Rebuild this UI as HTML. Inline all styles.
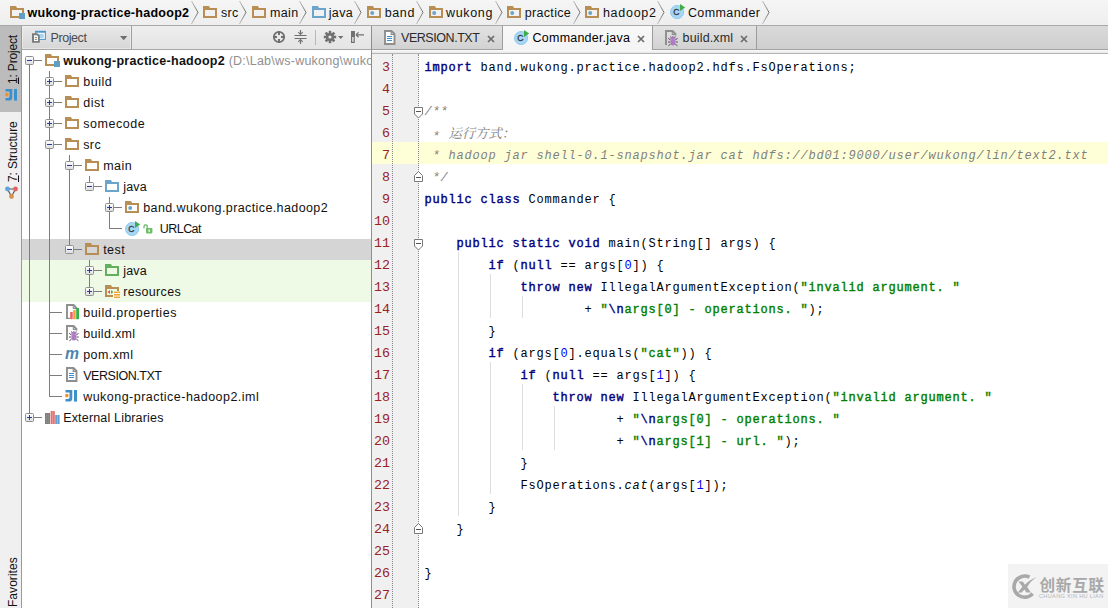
<!DOCTYPE html>
<html><head><meta charset="utf-8"><title>wukong-practice-hadoop2</title>
<style>
*{box-sizing:border-box;margin:0;padding:0}
html,body{width:1108px;height:608px;overflow:hidden;background:#fff}
body{position:relative;font-family:"Liberation Sans","Noto Sans CJK SC",sans-serif;font-size:12.5px;color:#000}
.abs{position:absolute}
.ic{position:absolute;display:block}
#nav{left:0;top:0;width:1108px;height:26px;background:linear-gradient(#f5f5f5,#eeeeee);border-bottom:1px solid #a9a9a9;overflow:hidden}
#nav .t{position:absolute;top:5px;line-height:17px;font-size:12.5px;white-space:pre;color:#111}
#nav .b{font-weight:bold;color:#000}
#strip{left:0;top:26px;width:21px;height:582px;background:#f0f0f0;overflow:hidden}
#stripb{left:21px;top:26px;width:1px;height:582px;background:#9a9a9a}
.vt{position:absolute;transform-origin:0 0;transform:rotate(-90deg);white-space:pre;font-size:12px;line-height:14px;height:14px;color:#111}
#ph{left:22px;top:26px;width:349px;height:24px;background:linear-gradient(#eeeeee,#e4e4e4);border-bottom:1px solid #a6a6a6;overflow:hidden}
#tree{left:22px;top:50px;width:349px;height:558px;background:#fff;overflow:hidden}
#tree .t{position:absolute;line-height:17px;white-space:pre;font-size:12.5px;color:#111}
#edb{left:371px;top:26px;width:1px;height:582px;background:#8e8e8e}
#tabs{left:372px;top:26px;width:736px;height:24px;background:linear-gradient(#dadada,#cecece);border-bottom:1px solid #a2a2a2}
#tabs2{left:372px;top:50px;width:736px;height:4px;background:linear-gradient(#fbfbfb,#e8e8e8);border-bottom:1px solid #b4b4b4}
.tab{position:absolute;top:0;height:23px;background:linear-gradient(#e2e2e2,#d2d2d2);border-right:1px solid #9c9c9c}
.tab.act{height:24px;background:linear-gradient(#f8f8f8,#f4f4f4)}
.tab .t{position:absolute;top:3.5px;line-height:17px;font-size:12.5px;white-space:pre;color:#2a2a2a}
#gut{left:372px;top:54px;width:47px;height:554px;background:#f0f0f0}
.ln{position:absolute;left:365px;width:25px;text-align:right;font-family:"Liberation Mono",monospace;font-size:13.33px;line-height:17px;height:17px;color:#992222}
.cl{position:absolute;left:424.4px;font-family:"Liberation Mono","Noto Serif CJK SC",monospace;font-size:12px;letter-spacing:0.8px;line-height:17px;height:17px;white-space:pre;color:#000}
.k{color:#000080;-webkit-text-stroke:0.4px #000080}
.s{color:#008000;-webkit-text-stroke:0.4px #008000}
.n{color:#0000ff}
.c{color:#808080;font-style:italic}
.i{font-style:italic}
.zh{font-family:"Noto Serif CJK SC","Noto Sans CJK SC",serif;font-size:13.33px;letter-spacing:0;position:relative;top:-2px}
.zhw{font-family:"Noto Sans CJK SC",sans-serif}
</style></head><body>
<div id="nav" class="abs"><svg width="0" height="0" style="position:absolute"><defs><linearGradient id="cg" gradientUnits="userSpaceOnUse" x1="0" y1="0" x2="0" y2="25"><stop offset="0" stop-color="#c8c8c8"/><stop offset="0.5" stop-color="#6a6a6a"/><stop offset="1" stop-color="#c8c8c8"/></linearGradient><linearGradient id="tg" x1="0" y1="0" x2="0" y2="1"><stop offset="0" stop-color="#fff"/><stop offset="1" stop-color="#dcdcdc"/></linearGradient></defs></svg><div class="ic" style="left:10px;top:6px"><svg width="16" height="14" viewBox="0 0 16 14" style="display:block"><path fill="#b98e54" fill-rule="evenodd" d="M0,0h6l1,2h7v10h-14z M2,4h10v6h-10z"/><rect x="9" y="7" width="6" height="6" fill="#5f9fc6" stroke="#f4f4f4" stroke-width="0"/></svg></div><span class="t b" style="left:27.5px;letter-spacing:0.269px">wukong-practice-hadoop2</span><svg class="ic" style="left:190.5px;top:0" width="8" height="25" viewBox="0 0 8 25"><path d="M0.5,1L7,12.4L0.5,24" fill="none" stroke="url(#cg)" stroke-width="1"/></svg><div class="ic" style="left:203px;top:6px"><svg width="16" height="14" viewBox="0 0 16 14" style="display:block"><path fill="#b98e54" fill-rule="evenodd" d="M0,0h6l1,2h7v10h-14z M2,4h10v6h-10z"/></svg></div><span class="t" style="left:220.9px;letter-spacing:0.314px">src</span><svg class="ic" style="left:238.6px;top:0" width="8" height="25" viewBox="0 0 8 25"><path d="M0.5,1L7,12.4L0.5,24" fill="none" stroke="url(#cg)" stroke-width="1"/></svg><div class="ic" style="left:252px;top:6px"><svg width="16" height="14" viewBox="0 0 16 14" style="display:block"><path fill="#b98e54" fill-rule="evenodd" d="M0,0h6l1,2h7v10h-14z M2,4h10v6h-10z"/></svg></div><span class="t" style="left:270.0px;letter-spacing:0.369px">main</span><svg class="ic" style="left:299px;top:0" width="8" height="25" viewBox="0 0 8 25"><path d="M0.5,1L7,12.4L0.5,24" fill="none" stroke="url(#cg)" stroke-width="1"/></svg><div class="ic" style="left:312px;top:6px"><svg width="16" height="14" viewBox="0 0 16 14" style="display:block"><path fill="#6ba5cb" fill-rule="evenodd" d="M0,0h6l1,2h7v10h-14z M2,4h10v6h-10z"/></svg></div><span class="t" style="left:328.7px;letter-spacing:0.388px">java</span><svg class="ic" style="left:353.6px;top:0" width="8" height="25" viewBox="0 0 8 25"><path d="M0.5,1L7,12.4L0.5,24" fill="none" stroke="url(#cg)" stroke-width="1"/></svg><div class="ic" style="left:367px;top:6px"><svg width="16" height="14" viewBox="0 0 16 14" style="display:block"><path fill="#b98e54" fill-rule="evenodd" d="M0,0h6l1,2h7v10h-14z M2,4h10v6h-10z"/><circle cx="5.2" cy="7" r="2" fill="#6ba5cb"/></svg></div><span class="t" style="left:384.7px;letter-spacing:0.629px">band</span><svg class="ic" style="left:416px;top:0" width="8" height="25" viewBox="0 0 8 25"><path d="M0.5,1L7,12.4L0.5,24" fill="none" stroke="url(#cg)" stroke-width="1"/></svg><div class="ic" style="left:428.5px;top:6px"><svg width="16" height="14" viewBox="0 0 16 14" style="display:block"><path fill="#b98e54" fill-rule="evenodd" d="M0,0h6l1,2h7v10h-14z M2,4h10v6h-10z"/><circle cx="5.2" cy="7" r="2" fill="#6ba5cb"/></svg></div><span class="t" style="left:446.1px;letter-spacing:0.641px">wukong</span><svg class="ic" style="left:495px;top:0" width="8" height="25" viewBox="0 0 8 25"><path d="M0.5,1L7,12.4L0.5,24" fill="none" stroke="url(#cg)" stroke-width="1"/></svg><div class="ic" style="left:507px;top:6px"><svg width="16" height="14" viewBox="0 0 16 14" style="display:block"><path fill="#b98e54" fill-rule="evenodd" d="M0,0h6l1,2h7v10h-14z M2,4h10v6h-10z"/><circle cx="5.2" cy="7" r="2" fill="#6ba5cb"/></svg></div><span class="t" style="left:524.7px;letter-spacing:0.331px">practice</span><svg class="ic" style="left:573px;top:0" width="8" height="25" viewBox="0 0 8 25"><path d="M0.5,1L7,12.4L0.5,24" fill="none" stroke="url(#cg)" stroke-width="1"/></svg><div class="ic" style="left:585px;top:6px"><svg width="16" height="14" viewBox="0 0 16 14" style="display:block"><path fill="#b98e54" fill-rule="evenodd" d="M0,0h6l1,2h7v10h-14z M2,4h10v6h-10z"/><circle cx="5.2" cy="7" r="2" fill="#6ba5cb"/></svg></div><span class="t" style="left:602.9px;letter-spacing:0.738px">hadoop2</span><svg class="ic" style="left:657.3px;top:0" width="8" height="25" viewBox="0 0 8 25"><path d="M0.5,1L7,12.4L0.5,24" fill="none" stroke="url(#cg)" stroke-width="1"/></svg><div class="ic" style="left:670px;top:3px"><svg width="16" height="16" viewBox="0 0 16 16" style="display:block"><circle cx="7.1" cy="9" r="6.6" fill="#a6d6f4" stroke="#86c4ec" stroke-width="0.8"/><text x="6.3" y="12" font-family="Liberation Sans,sans-serif" font-size="8.6" text-anchor="middle" fill="#33383e" stroke="#33383e" stroke-width="0.3">C</text><path d="M10,1v7l5.2,-3.5z" fill="#3fae49"/></svg></div><span class="t" style="left:687.9px;letter-spacing:0.415px">Commander</span><svg class="ic" style="left:762px;top:0" width="8" height="25" viewBox="0 0 8 25"><path d="M0.5,1L7,12.4L0.5,24" fill="none" stroke="url(#cg)" stroke-width="1"/></svg></div>
<div id="strip" class="abs"><div class="abs" style="left:0;top:0px;width:21px;height:86px;background:#bcbcbc"></div><div class="vt" style="left:6px;top:57.5px;letter-spacing:-0.167px"><u>1</u>: Project</div><div class="ic" style="left:5px;top:63px"><svg width="13" height="12" viewBox="0 0 13 12" style="display:block"><path d="M0.5,0h6.8v8.2a3.4,3.4 0 0 1 -3.4,3.4h-3.4v-2.6h2.6a1.4,1.4 0 0 0 1.4,-1.4v-5h-4z" fill="#3f8fc8"/><rect x="9" y="0" width="3" height="11.6" fill="#3f8fc8"/><circle cx="1.8" cy="5.6" r="1.8" fill="#f0922a"/></svg></div><div class="vt" style="left:6px;top:155.5px;letter-spacing:-0.121px"><u>7</u>: Structure</div><svg class="ic" style="left:4px;top:159px" width="15" height="15" viewBox="0 0 15 15"><path d="M3.5,4L11.5,4L7.5,11.5z" fill="none" stroke="#555" stroke-width="1.1"/><circle cx="3.5" cy="4" r="2.4" fill="#5fa3dc"/><circle cx="11.5" cy="4" r="2.4" fill="#e06464"/><circle cx="7.5" cy="11.5" r="2.4" fill="#d9924a"/></svg><div class="vt" style="left:6px;top:581px;letter-spacing:0.043px">Favorites</div></div><div id="stripb" class="abs"></div>
<div id="ph" class="abs"><div class="abs" style="left:0;top:0;width:110px;height:23px;background:linear-gradient(#e9e9e9,#d6d6d6);border-right:1px solid #a0a0a0;box-shadow:inset 0 0 0 1px rgba(255,255,255,0.35)"></div><svg class="ic" style="left:9px;top:4px" width="16" height="14" viewBox="0 0 16 14"><rect x="4.6" y="1.4" width="9.8" height="8" fill="#eef6fc" stroke="#4a97c8" stroke-width="1"/><rect x="4.1" y="0.9" width="10.8" height="1.8" fill="#4a97c8"/><rect x="6.6" y="4" width="6" height="4" fill="#a8d4f0"/><path d="M1,3.2h5.4l2.4,2.2v7.4h-7.8z" fill="#7c7c7c"/><path d="M3,5.2h2.8l1.2,1v4.8h-4z" fill="#fff"/><rect x="3.8" y="6.9" width="2.3" height="0.9" fill="#7c7c7c"/><rect x="3.8" y="8.9" width="2.3" height="0.9" fill="#7c7c7c"/></svg><span class="abs" style="left:28.6px;top:4px;line-height:17px;font-size:12.5px;color:#4a4a4a;letter-spacing:-0.434px">Project</span><svg class="ic" style="left:98px;top:10px" width="8" height="5" viewBox="0 0 8 5"><path d="M0,0h7.4l-3.7,4.2z" fill="#6e6e6e"/></svg><svg class="ic" style="left:250px;top:4px" width="14" height="14" viewBox="0 0 14 14"><circle cx="7" cy="7" r="5.2" fill="none" stroke="#707070" stroke-width="1.8"/><path d="M7,1v4M7,9v4M1,7h4M9,7h4" stroke="#707070" stroke-width="2"/></svg><svg class="ic" style="left:272px;top:4px" width="13" height="15" viewBox="0 0 13 15"><path d="M0.5,5.5h12M0.5,8.5h12" stroke="#707070" stroke-width="1"/><path d="M6.5,0v4M6.5,14v-4" stroke="#707070" stroke-width="1.2"/><path d="M4.3,2.1l2.2,2.4l2.2,-2.4M4.3,11.9l2.2,-2.4l2.2,2.4" fill="none" stroke="#707070" stroke-width="1.1"/></svg><div class="abs" style="left:293px;top:4px;width:1px;height:15px;background:#b8b8b8"></div><svg class="ic" style="left:301px;top:4px" width="14" height="14" viewBox="0 0 14 14"><g transform="translate(7,7)"><g fill="#707070"><rect x="-1.3" y="-6.2" width="2.6" height="12.4"/><rect x="-1.3" y="-6.2" width="2.6" height="12.4" transform="rotate(45)"/><rect x="-1.3" y="-6.2" width="2.6" height="12.4" transform="rotate(90)"/><rect x="-1.3" y="-6.2" width="2.6" height="12.4" transform="rotate(135)"/><circle r="4"/></g><circle r="1.6" fill="#e8e8e8"/></g></svg><svg class="ic" style="left:316px;top:10px" width="6" height="4" viewBox="0 0 6 4"><path d="M0,0h5.4l-2.7,3z" fill="#707070"/></svg><svg class="ic" style="left:329px;top:5px" width="14" height="13" viewBox="0 0 14 13"><rect x="0.6" y="0.6" width="2.6" height="10.8" fill="#e8e8e8" stroke="#707070" stroke-width="1.2"/><rect x="0" y="0" width="3.8" height="6" fill="#707070"/><path d="M5,3.8h8M5,3.8l2.6,-2.4M5,3.8l2.6,2.4" stroke="#707070" stroke-width="1.2" fill="none"/></svg></div>
<div id="tree" class="abs"><div class="abs" style="left:0;top:189px;width:349px;height:21px;background:#d5d5d5"></div><div class="abs" style="left:0;top:210px;width:349px;height:42px;background:#eef9e6"></div><div class="abs" style="left:12px;top:10px;width:8px;height:1px;background:#7d7d7d"></div><div class="abs" style="left:32px;top:31px;width:8px;height:1px;background:#7d7d7d"></div><div class="abs" style="left:32px;top:52px;width:8px;height:1px;background:#7d7d7d"></div><div class="abs" style="left:32px;top:73px;width:8px;height:1px;background:#7d7d7d"></div><div class="abs" style="left:32px;top:94px;width:8px;height:1px;background:#7d7d7d"></div><div class="abs" style="left:52px;top:115px;width:8px;height:1px;background:#7d7d7d"></div><div class="abs" style="left:72px;top:136px;width:8px;height:1px;background:#7d7d7d"></div><div class="abs" style="left:92px;top:157px;width:8px;height:1px;background:#7d7d7d"></div><div class="abs" style="left:87px;top:178px;width:13px;height:1px;background:#7d7d7d"></div><div class="abs" style="left:52px;top:199px;width:8px;height:1px;background:#7d7d7d"></div><div class="abs" style="left:72px;top:220px;width:8px;height:1px;background:#7d7d7d"></div><div class="abs" style="left:72px;top:241px;width:8px;height:1px;background:#7d7d7d"></div><div class="abs" style="left:27px;top:262px;width:13px;height:1px;background:#7d7d7d"></div><div class="abs" style="left:27px;top:283px;width:13px;height:1px;background:#7d7d7d"></div><div class="abs" style="left:27px;top:304px;width:13px;height:1px;background:#7d7d7d"></div><div class="abs" style="left:27px;top:325px;width:13px;height:1px;background:#7d7d7d"></div><div class="abs" style="left:27px;top:346px;width:13px;height:1px;background:#7d7d7d"></div><div class="abs" style="left:12px;top:367px;width:8px;height:1px;background:#7d7d7d"></div><div class="abs" style="left:7px;top:15px;width:1px;height:348px;background:#7d7d7d"></div><div class="abs" style="left:27px;top:21px;width:1px;height:325px;background:#7d7d7d"></div><div class="abs" style="left:47px;top:105px;width:1px;height:90px;background:#7d7d7d"></div><div class="abs" style="left:67px;top:126px;width:1px;height:6px;background:#7d7d7d"></div><div class="abs" style="left:87px;top:147px;width:1px;height:31px;background:#7d7d7d"></div><div class="abs" style="left:67px;top:210px;width:1px;height:31px;background:#7d7d7d"></div><svg class="ic" style="left:3px;top:6px" width="9" height="9" viewBox="0 0 9 9"><rect x="0.5" y="0.5" width="8" height="8" rx="1" fill="url(#tg)" stroke="#8f8f8f"/><path d="M2,4.5h5" stroke="#2b3a9a" stroke-width="1"/></svg><div class="ic" style="left:23px;top:4px"><svg width="16" height="14" viewBox="0 0 16 14" style="display:block"><path fill="#b98e54" fill-rule="evenodd" d="M0,0h6l1,2h7v10h-14z M2,4h10v6h-10z"/><rect x="9" y="7" width="6" height="6" fill="#5f9fc6" stroke="#f4f4f4" stroke-width="0"/></svg></div><span class="t" style="left:41.2px;top:3px;letter-spacing:0.269px;font-weight:bold">wukong-practice-hadoop2</span><span class="t" style="left:203px;top:3px;color:#909090;letter-spacing:0.23px"> (D:\Lab\ws-wukong\wukong-practice-hadoop2)</span><svg class="ic" style="left:23px;top:27px" width="9" height="9" viewBox="0 0 9 9"><rect x="0.5" y="0.5" width="8" height="8" rx="1" fill="url(#tg)" stroke="#8f8f8f"/><path d="M2,4.5h5" stroke="#2b3a9a" stroke-width="1"/><path d="M4.5,2v5" stroke="#2b3a9a" stroke-width="1"/></svg><div class="ic" style="left:43px;top:25px"><svg width="16" height="14" viewBox="0 0 16 14" style="display:block"><path fill="#b98e54" fill-rule="evenodd" d="M0,0h6l1,2h7v10h-14z M2,4h10v6h-10z"/></svg></div><span class="t" style="left:61.2px;top:24px;letter-spacing:0.52px;">build</span><svg class="ic" style="left:23px;top:48px" width="9" height="9" viewBox="0 0 9 9"><rect x="0.5" y="0.5" width="8" height="8" rx="1" fill="url(#tg)" stroke="#8f8f8f"/><path d="M2,4.5h5" stroke="#2b3a9a" stroke-width="1"/><path d="M4.5,2v5" stroke="#2b3a9a" stroke-width="1"/></svg><div class="ic" style="left:43px;top:46px"><svg width="16" height="14" viewBox="0 0 16 14" style="display:block"><path fill="#b98e54" fill-rule="evenodd" d="M0,0h6l1,2h7v10h-14z M2,4h10v6h-10z"/></svg></div><span class="t" style="left:61.2px;top:45px;letter-spacing:0.549px;">dist</span><svg class="ic" style="left:23px;top:69px" width="9" height="9" viewBox="0 0 9 9"><rect x="0.5" y="0.5" width="8" height="8" rx="1" fill="url(#tg)" stroke="#8f8f8f"/><path d="M2,4.5h5" stroke="#2b3a9a" stroke-width="1"/><path d="M4.5,2v5" stroke="#2b3a9a" stroke-width="1"/></svg><div class="ic" style="left:43px;top:67px"><svg width="16" height="14" viewBox="0 0 16 14" style="display:block"><path fill="#b98e54" fill-rule="evenodd" d="M0,0h6l1,2h7v10h-14z M2,4h10v6h-10z"/></svg></div><span class="t" style="left:61.2px;top:66px;letter-spacing:0.545px;">somecode</span><svg class="ic" style="left:23px;top:90px" width="9" height="9" viewBox="0 0 9 9"><rect x="0.5" y="0.5" width="8" height="8" rx="1" fill="url(#tg)" stroke="#8f8f8f"/><path d="M2,4.5h5" stroke="#2b3a9a" stroke-width="1"/></svg><div class="ic" style="left:43px;top:88px"><svg width="16" height="14" viewBox="0 0 16 14" style="display:block"><path fill="#b98e54" fill-rule="evenodd" d="M0,0h6l1,2h7v10h-14z M2,4h10v6h-10z"/></svg></div><span class="t" style="left:61.2px;top:87px;letter-spacing:0.414px;">src</span><svg class="ic" style="left:43px;top:111px" width="9" height="9" viewBox="0 0 9 9"><rect x="0.5" y="0.5" width="8" height="8" rx="1" fill="url(#tg)" stroke="#8f8f8f"/><path d="M2,4.5h5" stroke="#2b3a9a" stroke-width="1"/></svg><div class="ic" style="left:63px;top:109px"><svg width="16" height="14" viewBox="0 0 16 14" style="display:block"><path fill="#b98e54" fill-rule="evenodd" d="M0,0h6l1,2h7v10h-14z M2,4h10v6h-10z"/></svg></div><span class="t" style="left:81.2px;top:108px;letter-spacing:0.469px;">main</span><svg class="ic" style="left:63px;top:132px" width="9" height="9" viewBox="0 0 9 9"><rect x="0.5" y="0.5" width="8" height="8" rx="1" fill="url(#tg)" stroke="#8f8f8f"/><path d="M2,4.5h5" stroke="#2b3a9a" stroke-width="1"/></svg><div class="ic" style="left:83px;top:130px"><svg width="16" height="14" viewBox="0 0 16 14" style="display:block"><path fill="#6ba5cb" fill-rule="evenodd" d="M0,0h6l1,2h7v10h-14z M2,4h10v6h-10z"/></svg></div><span class="t" style="left:101.2px;top:129px;letter-spacing:0.187px;">java</span><svg class="ic" style="left:83px;top:153px" width="9" height="9" viewBox="0 0 9 9"><rect x="0.5" y="0.5" width="8" height="8" rx="1" fill="url(#tg)" stroke="#8f8f8f"/><path d="M2,4.5h5" stroke="#2b3a9a" stroke-width="1"/><path d="M4.5,2v5" stroke="#2b3a9a" stroke-width="1"/></svg><div class="ic" style="left:103px;top:151px"><svg width="16" height="14" viewBox="0 0 16 14" style="display:block"><path fill="#b98e54" fill-rule="evenodd" d="M0,0h6l1,2h7v10h-14z M2,4h10v6h-10z"/><circle cx="5.2" cy="7" r="2" fill="#6ba5cb"/></svg></div><span class="t" style="left:121.19999999999999px;top:150px;letter-spacing:0.398px;">band.wukong.practice.hadoop2</span><div class="ic" style="left:103px;top:170px"><svg width="16" height="16" viewBox="0 0 16 16" style="display:block"><circle cx="7.1" cy="9" r="6.6" fill="#a6d6f4" stroke="#86c4ec" stroke-width="0.8"/><text x="6.3" y="12" font-family="Liberation Sans,sans-serif" font-size="8.6" text-anchor="middle" fill="#33383e" stroke="#33383e" stroke-width="0.3">C</text><path d="M10,1v7l5.2,-3.5z" fill="#3fae49"/></svg></div><div class="ic" style="left:121px;top:173.5px"><svg width="10" height="10" viewBox="0 0 10 10" style="display:block"><path d="M1,4.2v-1.8a1.6,1.6 0 0 1 3.2,0v1.8" fill="none" stroke="#5faf5f" stroke-width="1.2"/><rect x="3" y="4" width="6.4" height="5.4" rx="0.8" fill="#6fbf6a"/><rect x="5.5" y="5.6" width="1.4" height="2.2" fill="#fff"/></svg></div><span class="t" style="left:137.79999999999998px;top:171px;letter-spacing:-0.554px;">URLCat</span><svg class="ic" style="left:43px;top:195px" width="9" height="9" viewBox="0 0 9 9"><rect x="0.5" y="0.5" width="8" height="8" rx="1" fill="url(#tg)" stroke="#8f8f8f"/><path d="M2,4.5h5" stroke="#2b3a9a" stroke-width="1"/></svg><div class="ic" style="left:63px;top:193px"><svg width="16" height="14" viewBox="0 0 16 14" style="display:block"><path fill="#b98e54" fill-rule="evenodd" d="M0,0h6l1,2h7v10h-14z M2,4h10v6h-10z"/></svg></div><span class="t" style="left:81.2px;top:192px;letter-spacing:0.448px;">test</span><svg class="ic" style="left:63px;top:216px" width="9" height="9" viewBox="0 0 9 9"><rect x="0.5" y="0.5" width="8" height="8" rx="1" fill="url(#tg)" stroke="#8f8f8f"/><path d="M2,4.5h5" stroke="#2b3a9a" stroke-width="1"/><path d="M4.5,2v5" stroke="#2b3a9a" stroke-width="1"/></svg><div class="ic" style="left:83px;top:214px"><svg width="16" height="14" viewBox="0 0 16 14" style="display:block"><path fill="#62b05f" fill-rule="evenodd" d="M0,0h6l1,2h7v10h-14z M2,4h10v6h-10z"/></svg></div><span class="t" style="left:101.2px;top:213px;letter-spacing:0.187px;">java</span><svg class="ic" style="left:63px;top:237px" width="9" height="9" viewBox="0 0 9 9"><rect x="0.5" y="0.5" width="8" height="8" rx="1" fill="url(#tg)" stroke="#8f8f8f"/><path d="M2,4.5h5" stroke="#2b3a9a" stroke-width="1"/><path d="M4.5,2v5" stroke="#2b3a9a" stroke-width="1"/></svg><div class="ic" style="left:83px;top:235px"><svg width="16" height="14" viewBox="0 0 16 14" style="display:block"><path fill="#b98e54" fill-rule="evenodd" d="M0,0h6l1,2h7v10h-14z M2,4h10v6h-10z"/><path d="M5,5v4l-2.5,-2z" fill="#e0524a"/><path d="M6,5v4l2.5,-2z" fill="#58b04e"/><rect x="8" y="6" width="7" height="8" fill="#fff"/><rect x="9" y="6.5" width="6" height="1.6" fill="#f0a830"/><rect x="9" y="9" width="6" height="1.6" fill="#f0a830"/><rect x="9" y="11.5" width="6" height="1.6" fill="#f0a830"/></svg></div><span class="t" style="left:101.2px;top:234px;letter-spacing:0.326px;">resources</span><div class="ic" style="left:44px;top:254px"><svg width="14" height="17" viewBox="0 0 14 17" style="display:block"><path d="M1,15V1H7.6L10.4,3.8V5.6" fill="none" stroke="#8e8e8e" stroke-width="1.9"/><path d="M7.3,1.2v3.2h3.2" fill="none" stroke="#8e8e8e" stroke-width="1.1"/><path d="M1,14.4h3" stroke="#8e8e8e" stroke-width="1.2"/><rect x="4.2" y="8" width="2.5" height="7.2" fill="#ea5f5f"/><rect x="7.2" y="6" width="2.5" height="9.2" fill="#f0a23c"/><rect x="10.2" y="4" width="2.8" height="11.2" fill="#35b04a"/></svg></div><span class="t" style="left:61.2px;top:255px;letter-spacing:0.515px;">build.properties</span><div class="ic" style="left:44px;top:275px"><svg width="14" height="17" viewBox="0 0 14 17" style="display:block"><path d="M1,15V1H7.6L10.4,3.8V5.6" fill="none" stroke="#8e8e8e" stroke-width="1.9"/><path d="M7.3,1.2v3.2h3.2" fill="none" stroke="#8e8e8e" stroke-width="1.1"/><path d="M5.6,10L3.2,8.4M5.2,12H3M5.6,14L3.4,15.8M10.2,10L12.6,8.4M10.6,12H12.8M10.2,14L12.4,15.8" stroke="#505050" stroke-width="1" fill="none"/><path d="M5.6,6.4v1M7.9,6v1.2M10.2,6.4v1" stroke="#505050" stroke-width="0.9"/><rect x="5.3" y="7" width="5.2" height="2.6" rx="0.9" fill="#b07ac8"/><ellipse cx="7.9" cy="12.2" rx="2.5" ry="3.3" fill="#b07ac8"/></svg></div><span class="t" style="left:61.2px;top:276px;letter-spacing:0.321px;">build.xml</span><div class="ic" style="left:43px;top:298px"><svg width="16" height="14" viewBox="0 0 16 14" style="display:block;overflow:visible"><text x="0" y="11" font-family="Liberation Sans,sans-serif" font-size="16" font-weight="bold" font-style="italic" fill="#4f86ad" textLength="14" lengthAdjust="spacingAndGlyphs">m</text></svg></div><span class="t" style="left:61.2px;top:297px;letter-spacing:0.428px;">pom.xml</span><div class="ic" style="left:44px;top:317px"><svg width="14" height="16" viewBox="0 0 14 16" style="display:block"><path d="M1,1h6.5l3,3v10h-9.5z" fill="#fdfdfd" stroke="#8e8e8e" stroke-width="1.9"/><path d="M7.2,1v3.3h3.3" fill="none" stroke="#8e8e8e" stroke-width="1.2"/><path d="M3,6.5h5M3,8.5h5M3,10.5h5" stroke="#3f8fd0" stroke-width="1"/></svg></div><span class="t" style="left:61.2px;top:318px;letter-spacing:-0.454px;">VERSION.TXT</span><div class="ic" style="left:43px;top:340px"><svg width="13" height="12" viewBox="0 0 13 12" style="display:block"><path d="M0.5,0h6.8v8.2a3.4,3.4 0 0 1 -3.4,3.4h-3.4v-2.6h2.6a1.4,1.4 0 0 0 1.4,-1.4v-5h-4z" fill="#3f8fc8"/><rect x="9" y="0" width="3" height="11.6" fill="#3f8fc8"/><circle cx="1.8" cy="5.6" r="1.8" fill="#f0922a"/></svg></div><span class="t" style="left:61.2px;top:339px;letter-spacing:0.47px;">wukong-practice-hadoop2.iml</span><svg class="ic" style="left:3px;top:363px" width="9" height="9" viewBox="0 0 9 9"><rect x="0.5" y="0.5" width="8" height="8" rx="1" fill="url(#tg)" stroke="#8f8f8f"/><path d="M2,4.5h5" stroke="#2b3a9a" stroke-width="1"/><path d="M4.5,2v5" stroke="#2b3a9a" stroke-width="1"/></svg><div class="ic" style="left:23px;top:361px"><svg width="15" height="13" viewBox="0 0 15 13" style="display:block"><rect x="0" y="2" width="5" height="11" fill="#7a7a7a"/><path d="M1.6,2v11M3.3,2v11M0,5h5M0,8h5M0,11h5" stroke="#9a9a9a" stroke-width="0.5"/><rect x="5.6" y="0" width="4.2" height="13" fill="#e07070"/><path d="M7.7,0v13" stroke="#f0a0a0" stroke-width="0.8"/><rect x="10.2" y="4" width="4.4" height="9" fill="#5f9fd0"/><path d="M12.4,4v9" stroke="#9cc8ea" stroke-width="0.8"/></svg></div><span class="t" style="left:41.2px;top:360px;letter-spacing:0.173px;">External Libraries</span></div>
<div id="edb" class="abs"></div>
<div id="tabs" class="abs"><div class="tab" style="left:0;width:131px"><div class="ic" style="left:12px;top:4px"><svg width="14" height="16" viewBox="0 0 14 16" style="display:block"><path d="M1,1h6.5l3,3v10h-9.5z" fill="#fdfdfd" stroke="#8e8e8e" stroke-width="1.9"/><path d="M7.2,1v3.3h3.3" fill="none" stroke="#8e8e8e" stroke-width="1.2"/><path d="M3,6.5h5M3,8.5h5M3,10.5h5" stroke="#3f8fd0" stroke-width="1"/></svg></div><span class="t" style="left:29px;letter-spacing:-0.444px">VERSION.TXT</span><svg class="ic" style="left:115px;top:9px" width="8" height="8" viewBox="0 0 8 8"><path d="M1,1l6,6M7,1l-6,6" stroke="#6c6c6c" stroke-width="1.7"/></svg></div><div class="tab act" style="left:131px;width:150px"><div class="ic" style="left:11px;top:3px"><svg width="16" height="16" viewBox="0 0 16 16" style="display:block"><circle cx="7.1" cy="9" r="6.6" fill="#a6d6f4" stroke="#86c4ec" stroke-width="0.8"/><text x="6.3" y="12" font-family="Liberation Sans,sans-serif" font-size="8.6" text-anchor="middle" fill="#33383e" stroke="#33383e" stroke-width="0.3">C</text><path d="M10,1v7l5.2,-3.5z" fill="#3fae49"/></svg></div><span class="t" style="left:29.6px;color:#000;letter-spacing:0.215px">Commander.java</span><svg class="ic" style="left:133.5px;top:9px" width="8" height="8" viewBox="0 0 8 8"><path d="M1,1l6,6M7,1l-6,6" stroke="#6c6c6c" stroke-width="1.7"/></svg></div><div class="tab" style="left:281px;width:104px"><div class="ic" style="left:12px;top:4px"><svg width="14" height="17" viewBox="0 0 14 17" style="display:block"><path d="M1,15V1H7.6L10.4,3.8V5.6" fill="none" stroke="#8e8e8e" stroke-width="1.9"/><path d="M7.3,1.2v3.2h3.2" fill="none" stroke="#8e8e8e" stroke-width="1.1"/><path d="M5.6,10L3.2,8.4M5.2,12H3M5.6,14L3.4,15.8M10.2,10L12.6,8.4M10.6,12H12.8M10.2,14L12.4,15.8" stroke="#505050" stroke-width="1" fill="none"/><path d="M5.6,6.4v1M7.9,6v1.2M10.2,6.4v1" stroke="#505050" stroke-width="0.9"/><rect x="5.3" y="7" width="5.2" height="2.6" rx="0.9" fill="#b07ac8"/><ellipse cx="7.9" cy="12.2" rx="2.5" ry="3.3" fill="#b07ac8"/></svg></div><span class="t" style="left:29.6px;letter-spacing:0.146px">build.xml</span><svg class="ic" style="left:87px;top:9px" width="8" height="8" viewBox="0 0 8 8"><path d="M1,1l6,6M7,1l-6,6" stroke="#6c6c6c" stroke-width="1.7"/></svg></div></div>
<div id="tabs2" class="abs"></div>
<div id="gut" class="abs"></div>
<div class="abs" style="left:372px;top:142px;width:736px;height:22px;background:#ffffd7"></div><div class="abs" style="left:392px;top:54px;width:0;height:554px;border-left:1px dotted #8a8a8a"></div><div class="abs" style="left:418px;top:54px;width:0;height:554px;border-left:1px dotted #8a8a8a"></div><div class="abs" style="left:458px;top:252px;width:1px;height:264px;background:#dedede"></div><div class="abs" style="left:490px;top:274px;width:1px;height:44px;background:#dedede"></div><div class="abs" style="left:522px;top:296px;width:1px;height:22px;background:#dedede"></div><div class="abs" style="left:490px;top:362px;width:1px;height:132px;background:#dedede"></div><div class="abs" style="left:522px;top:384px;width:1px;height:66px;background:#dedede"></div><div class="abs" style="left:554px;top:406px;width:1px;height:44px;background:#dedede"></div><div class="ln" style="top:58.5px">3</div><div class="cl" style="top:59.5px"><span class="k">import</span> band.wukong.practice.hadoop2.hdfs.FsOperations;</div><div class="ln" style="top:80.5px">4</div><div class="ln" style="top:102.5px">5</div><div class="cl" style="top:103.5px"><span class="c">/**</span></div><div class="ln" style="top:124.5px">6</div><div class="cl" style="top:125.5px"><span class="c"> * <span class="zh">运行方式：</span></span></div><div class="ln" style="top:146.5px">7</div><div class="cl" style="top:147.5px"><span class="c"> * hadoop jar shell-0.1-snapshot.jar cat hdfs://bd01:9000/user/wukong/lin/text2.txt</span></div><div class="ln" style="top:168.5px">8</div><div class="cl" style="top:169.5px"><span class="c"> */</span></div><div class="ln" style="top:190.5px">9</div><div class="cl" style="top:191.5px"><span class="k">public class</span> Commander {</div><div class="ln" style="top:212.5px">10</div><div class="ln" style="top:234.5px">11</div><div class="cl" style="top:235.5px">    <span class="k">public static void</span> main(String[] args) {</div><div class="ln" style="top:256.5px">12</div><div class="cl" style="top:257.5px">        <span class="k">if</span> (<span class="k">null</span> == args[<span class="n">0</span>]) {</div><div class="ln" style="top:278.5px">13</div><div class="cl" style="top:279.5px">            <span class="k">throw new</span> IllegalArgumentException(<span class="s">"invalid argument. "</span></div><div class="ln" style="top:300.5px">14</div><div class="cl" style="top:301.5px">                    + <span class="s">"</span><span class="k">\n</span><span class="s">args[0] - operations. "</span>);</div><div class="ln" style="top:322.5px">15</div><div class="cl" style="top:323.5px">        }</div><div class="ln" style="top:344.5px">16</div><div class="cl" style="top:345.5px">        <span class="k">if</span> (args[<span class="n">0</span>].equals(<span class="s">"cat"</span>)) {</div><div class="ln" style="top:366.5px">17</div><div class="cl" style="top:367.5px">            <span class="k">if</span> (<span class="k">null</span> == args[<span class="n">1</span>]) {</div><div class="ln" style="top:388.5px">18</div><div class="cl" style="top:389.5px">                <span class="k">throw new</span> IllegalArgumentException(<span class="s">"invalid argument. "</span></div><div class="ln" style="top:410.5px">19</div><div class="cl" style="top:411.5px">                        + <span class="s">"</span><span class="k">\n</span><span class="s">args[0] - operations. "</span></div><div class="ln" style="top:432.5px">20</div><div class="cl" style="top:433.5px">                        + <span class="s">"</span><span class="k">\n</span><span class="s">args[1] - url. "</span>);</div><div class="ln" style="top:454.5px">21</div><div class="cl" style="top:455.5px">            }</div><div class="ln" style="top:476.5px">22</div><div class="cl" style="top:477.5px">            FsOperations.<span class="i">cat</span>(args[<span class="n">1</span>]);</div><div class="ln" style="top:498.5px">23</div><div class="cl" style="top:499.5px">        }</div><div class="ln" style="top:520.5px">24</div><div class="cl" style="top:521.5px">    }</div><div class="ln" style="top:542.5px">25</div><div class="ln" style="top:564.5px">26</div><div class="cl" style="top:565.5px">}</div><div class="ln" style="top:586.5px">27</div><svg class="ic" style="left:414px;top:107px" width="9" height="12" viewBox="0 0 9 12"><path d="M0.5,0.5h8v6.5l-4,4l-4,-4z" fill="#fff" stroke="#787878"/><path d="M2,4.5h5" stroke="#555"/></svg><svg class="ic" style="left:414px;top:171px" width="9" height="12" viewBox="0 0 9 12"><path d="M0.5,10.5h8v-6l-4,-4l-4,4z" fill="#fff" stroke="#787878"/><path d="M2,6.5h5" stroke="#555"/></svg><svg class="ic" style="left:414px;top:239px" width="9" height="12" viewBox="0 0 9 12"><path d="M0.5,0.5h8v6.5l-4,4l-4,-4z" fill="#fff" stroke="#787878"/><path d="M2,4.5h5" stroke="#555"/></svg><svg class="ic" style="left:414px;top:523px" width="9" height="12" viewBox="0 0 9 12"><path d="M0.5,10.5h8v-6l-4,-4l-4,4z" fill="#fff" stroke="#787878"/><path d="M2,6.5h5" stroke="#555"/></svg>
<div class="abs" style="left:1008px;top:564px;width:100px;height:44px;background:#f3f3f3"></div><svg class="ic" style="left:1010px;top:573px" width="28" height="27" viewBox="0 0 28 27"><path d="M19.5,4.2A10.6,10.6 0 1 0 22.6,20.6" fill="none" stroke="#a9a9a9" stroke-width="3.6"/><path d="M8.5,8.5h4.2l2.3,3.3c3,-3.6 6.4,-5.8 11.6,-7.6c-4.2,2.6 -7,5.6 -9.4,9.8l3.6,5.6h-4.4l-2,-3.2l-2.6,3.2h-4l4.6,-5.8z" fill="#a9a9a9"/></svg><span class="abs zhw" style="left:1039.5px;top:575px;font-size:15.6px;line-height:18px;color:#a8a8a8;font-weight:700;letter-spacing:0.75px;white-space:pre">创新互联</span><span class="abs" style="left:1039px;top:592.5px;font-size:5.6px;line-height:7px;color:#b4b4b4;white-space:pre;letter-spacing:0.32px">CHUANG XIN HU LIAN</span>
</body></html>
